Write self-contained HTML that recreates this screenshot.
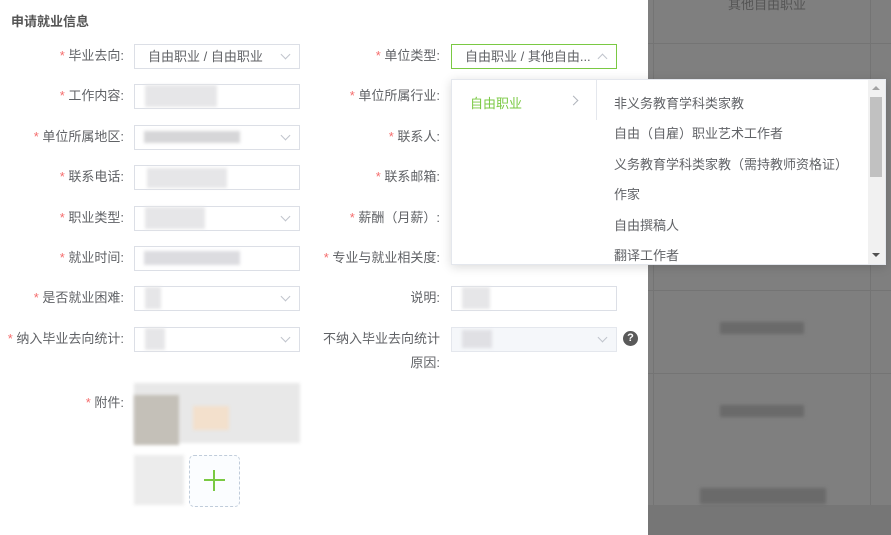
<!DOCTYPE html>
<html><head><meta charset="utf-8"><style>
*{box-sizing:border-box;margin:0;padding:0}
body{width:891px;height:535px;overflow:hidden;background:#fff;font-family:"Liberation Sans","Noto Sans CJK SC",sans-serif;font-size:13px;color:#606266;position:relative}
.a{position:absolute}
.t{left:11px;top:11px;font-weight:bold;color:#555;font-size:13px}
.l{text-align:right;width:200px;line-height:24px;white-space:nowrap}
.l b{color:#f56c6c;font-weight:normal}
.in{height:25px;border:1px solid #dcdfe6;background:#fff}
.blur{background:#e6e6e8;filter:blur(1.5px)}
.chev{position:absolute;right:10px;top:6px;width:7px;height:7px;border-right:1px solid #c0c4cc;border-bottom:1px solid #c0c4cc;transform:rotate(45deg)}
.ov{left:648px;top:0;width:243px;height:535px;background:#7f7f7f}
.dd{left:451px;top:79px;width:435px;height:186px;background:#fff;border:1px solid #e4e7ed;box-shadow:0 2px 10px rgba(0,0,0,.15)}
.it{position:absolute;left:162px;font-size:13px;color:#606266}
</style></head><body>
<div class="a ov">
<div class="a" style="left:5px;top:0;width:1px;height:535px;background:#747474"></div>
<div class="a" style="left:222px;top:0;width:1px;height:535px;background:#747474"></div>
<div class="a" style="left:0;top:43px;width:243px;height:1px;background:#747474"></div>
<div class="a" style="left:0;top:290px;width:243px;height:1px;background:#747474"></div>
<div class="a" style="left:0;top:373px;width:243px;height:1px;background:#747474"></div>
<div class="a" style="left:0;top:505px;width:243px;height:30px;background:#767676"></div>
<div class="a" style="left:80px;top:-6px;color:#555;font-size:13px">其他自由职业</div>
<div class="a blur" style="left:72px;top:322px;width:84px;height:12px;background:#6a6a6a"></div>
<div class="a blur" style="left:72px;top:405px;width:84px;height:12px;background:#6a6a6a"></div>
<div class="a blur" style="left:52px;top:488px;width:126px;height:16px;background:#6a6a6a"></div>
</div>
<div class="a t">申请就业信息</div>

<div class="a l" style="left:-76px;top:44px"><b>*</b> 毕业去向:</div>
<div class="a in" style="left:134px;top:44px;width:166px;padding:0 13px;line-height:23px">自由职业 / 自由职业<i class="chev"></i></div>
<div class="a l" style="left:-76px;top:84px"><b>*</b> 工作内容:</div>
<div class="a in" style="left:134px;top:84px;width:166px"><div class="a blur" style="left:10px;top:0;width:72px;height:22px"></div></div>
<div class="a l" style="left:-76px;top:125px"><b>*</b> 单位所属地区:</div>
<div class="a in" style="left:134px;top:125px;width:166px"><div class="a blur" style="left:9px;top:5px;width:96px;height:12px;background:#d6d6d8"></div><i class="chev"></i></div>
<div class="a l" style="left:-76px;top:165px"><b>*</b> 联系电话:</div>
<div class="a in" style="left:134px;top:165px;width:166px"><div class="a blur" style="left:12px;top:2px;width:80px;height:20px"></div></div>
<div class="a l" style="left:-76px;top:206px"><b>*</b> 职业类型:</div>
<div class="a in" style="left:134px;top:206px;width:166px"><div class="a blur" style="left:10px;top:0;width:60px;height:22px"></div><i class="chev"></i></div>
<div class="a l" style="left:-76px;top:246px"><b>*</b> 就业时间:</div>
<div class="a in" style="left:134px;top:246px;width:166px"><div class="a blur" style="left:9px;top:4px;width:96px;height:14px;background:#dcdce0"></div></div>
<div class="a l" style="left:-76px;top:286px"><b>*</b> 是否就业困难:</div>
<div class="a in" style="left:134px;top:286px;width:166px"><div class="a blur" style="left:10px;top:0;width:16px;height:22px"></div><i class="chev"></i></div>
<div class="a l" style="left:-76px;top:327px"><b>*</b> 纳入毕业去向统计:</div>
<div class="a in" style="left:134px;top:327px;width:166px"><div class="a blur" style="left:10px;top:0;width:20px;height:22px"></div><i class="chev"></i></div>
<div class="a l" style="left:-76px;top:391px"><b>*</b> 附件:</div>
<div class="a blur" style="left:134px;top:383px;width:166px;height:60px;background:#e8e8e8"></div>
<div class="a blur" style="left:134px;top:395px;width:45px;height:50px;background:#c4c0b8"></div>
<div class="a blur" style="left:193px;top:406px;width:36px;height:24px;background:#f3e0cc"></div>
<div class="a blur" style="left:134px;top:455px;width:50px;height:50px;background:#ececec"></div>
<div class="a" style="left:189px;top:455px;width:51px;height:52px;border:1px dashed #c0ccda;border-radius:5px;background:#fbfdff"></div>
<div class="a" style="left:204px;top:479px;width:21px;height:2px;background:#7ac943"></div>
<div class="a" style="left:213px;top:470px;width:2px;height:21px;background:#7ac943"></div>

<div class="a l" style="left:240px;top:44px"><b>*</b> 单位类型:</div>
<div class="a in" style="left:451px;top:44px;width:166px;border-color:#7ac943;padding:0 13px;line-height:23px">自由职业 / 其他自由...<i class="chev" style="transform:rotate(225deg);top:10px"></i></div>
<div class="a l" style="left:240px;top:84px"><b>*</b> 单位所属行业:</div>
<div class="a l" style="left:240px;top:125px"><b>*</b> 联系人:</div>
<div class="a l" style="left:240px;top:165px"><b>*</b> 联系邮箱:</div>
<div class="a l" style="left:240px;top:206px"><b>*</b> 薪酬（月薪）:</div>
<div class="a l" style="left:240px;top:246px"><b>*</b> 专业与就业相关度:</div>
<div class="a l" style="left:240px;top:286px">说明:</div>
<div class="a in" style="left:451px;top:286px;width:166px"><div class="a blur" style="left:10px;top:0;width:28px;height:22px"></div></div>
<div class="a l" style="left:240px;top:327px;line-height:24px">不纳入毕业去向统计<br>原因:</div>
<div class="a in" style="left:451px;top:327px;width:166px;background:#f5f7fa;border-color:#e4e7ed"><div class="a blur" style="left:10px;top:2px;width:30px;height:18px;background:#e0e0e4"></div><i class="chev"></i></div>
<div class="a" style="left:623px;top:331px;width:15px;height:15px;border-radius:50%;background:#5a5a5a;color:#fff;font-size:11px;font-weight:bold;text-align:center;line-height:15px">?</div>

<div class="a dd">
<div class="a" style="left:18px;top:13px;color:#7ac943">自由职业</div>
<div class="a" style="left:118px;top:17px;width:7px;height:7px;border-right:1px solid #b0b4bc;border-top:1px solid #b0b4bc;transform:rotate(45deg)"></div>
<div class="a" style="left:144px;top:0;width:1px;height:40px;background:#e4e7ed"></div>
<div class="it" style="top:13px">非义务教育学科类家教</div>
<div class="it" style="top:43px">自由（自雇）职业艺术工作者</div>
<div class="it" style="top:74px">义务教育学科类家教（需持教师资格证）</div>
<div class="it" style="top:104px">作家</div>
<div class="it" style="top:135px">自由撰稿人</div>
<div class="it" style="top:165px">翻译工作者</div>
<div class="a" style="left:416px;top:0;width:17px;height:184px;background:#f1f1f1"></div>
<div class="a" style="left:418px;top:17px;width:12px;height:80px;background:#c1c1c1"></div>
<div class="a" style="left:420px;top:6px;border:4px solid transparent;border-bottom-color:#a3a3a3;border-top:0"></div>
<div class="a" style="left:420px;top:173px;border:4px solid transparent;border-top-color:#505050;border-bottom:0"></div>
</div>
</body></html>
